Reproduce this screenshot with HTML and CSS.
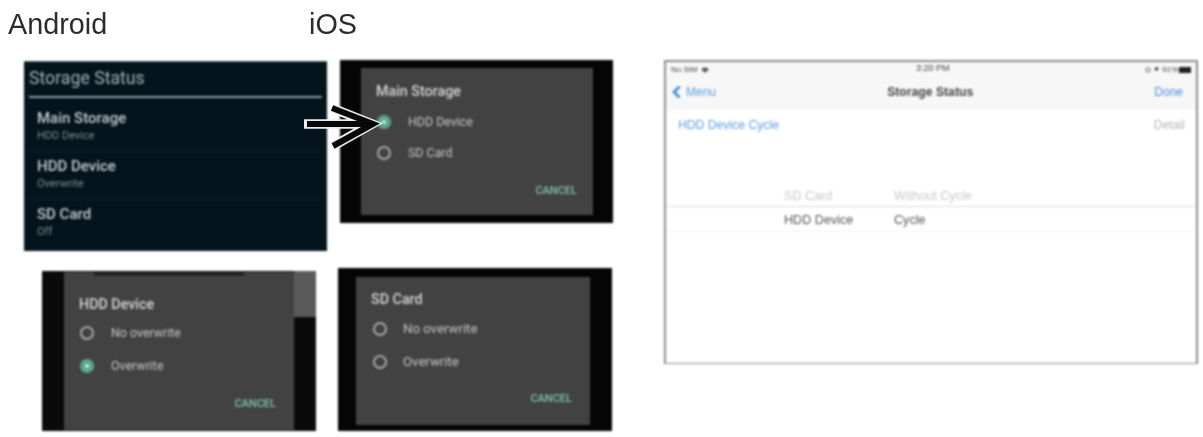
FILE: index.html
```html
<!DOCTYPE html>
<html>
<head>
    <meta charset="utf-8">
    <title>Storage Status</title>
    <link rel="stylesheet" href="styles.css">
</head>
<body>
    <div class="slide">
        <div class="left">
            <div class="labels">
                <div class="label label-android">Android</div>
                <div class="label">iOS</div>
            </div>
            <div class="shots-top">
                <div class="status-panel">
                    <div class="status-title">Storage Status</div>
                    <div class="status-item">
                        <div class="item-name">Main Storage</div>
                        <div class="item-value">HDD Device</div>
                    </div>
                    <div class="status-item">
                        <div class="item-name">HDD Device</div>
                        <div class="item-value">Overwrite</div>
                    </div>
                    <div class="status-item">
                        <div class="item-name">SD Card</div>
                        <div class="item-value">Off</div>
                    </div>
                </div>
                <div class="shot shot-main">
                    <div class="dialog dialog-main">
                        <div class="dialog-title">Main Storage</div>
                        <div class="option"><span class="radio radio-on"></span>HDD Device</div>
                        <div class="option"><span class="radio"></span>SD Card</div>
                        <div class="cancel">CANCEL</div>
                    </div>
                </div>
            </div>
            <div class="shots-bottom">
                <div class="shot shot-hdd">
                    <div class="dialog dialog-hdd">
                        <div class="dialog-title">HDD Device</div>
                        <div class="option"><span class="radio"></span>No overwrite</div>
                        <div class="option"><span class="radio radio-on"></span>Overwrite</div>
                        <div class="cancel">CANCEL</div>
                    </div>
                </div>
                <div class="shot shot-sd">
                    <div class="dialog dialog-sd">
                        <div class="dialog-title">SD Card</div>
                        <div class="option"><span class="radio"></span>No overwrite</div>
                        <div class="option"><span class="radio"></span>Overwrite</div>
                        <div class="cancel">CANCEL</div>
                    </div>
                </div>
            </div>
            <svg class="arrow" width="80" height="50" viewBox="0 0 80 50">
                <g fill="none" stroke-linejoin="miter" stroke-linecap="butt">
                    <path d="M1 19H66M29 3L69 19L30 41" stroke="#eeeeee" stroke-width="9.5"/>
                    <path d="M4 19H66M29 3L70 19L30 41" stroke="#080808" stroke-width="6"/>
                </g>
            </svg>
        </div>
        <div class="ios-panel">
            <div class="ios-top">
                <div class="ios-status">
                    <span class="ios-carrier">No SIM
                        <svg width="8" height="6" viewBox="0 0 8 6"><path d="M0 2a6 6 0 0 1 8 0L4 6z" fill="#555"/></svg>
                    </span>
                    <span class="ios-clock">3:20 PM</span>
                    <span class="ios-battery-wrap">
                        <svg width="6" height="6" viewBox="0 0 6 6"><circle cx="3" cy="3" r="2.2" fill="none" stroke="#666"/></svg>
                        <span class="ios-bt">✱</span>
                        91%<span class="ios-battery"></span>
                    </span>
                </div>
                <div class="ios-nav">
                    <span class="ios-back">
                        <svg width="9" height="14" viewBox="0 0 9 14"><path d="M7.5 1.5L2 7l5.5 5.5" fill="none" stroke="#3d8fd8" stroke-width="2.6"/></svg>
                        Menu
                    </span>
                    <span class="ios-title">Storage Status</span>
                    <span class="ios-done">Done</span>
                </div>
            </div>
            <div class="ios-row">
                <span class="ios-link">HDD Device Cycle</span>
                <span class="ios-detail">Detail</span>
            </div>
            <div class="picker">
                <div class="picker-row picker-dim">
                    <span class="picker-a">SD Card</span>
                    <span>Without Cycle</span>
                </div>
                <div class="picker-row picker-sel">
                    <span class="picker-a">HDD Device</span>
                    <span>Cycle</span>
                </div>
            </div>
        </div>
    </div>
</body>
</html>
```

FILE: styles.css
```css
* {
    box-sizing: border-box;
}

html, body {
    margin: 0;
    padding: 0;
    background-color: white;
}

body {
    width: 1203px;
    height: 437px;
    overflow: hidden;
    font-family: 'Liberation Sans', sans-serif;
}

.slide {
    display: flex;
    padding-left: 8px;
}

.left {
    position: relative;
    width: 656px;
}

.labels {
    display: flex;
    height: 61px;
    padding-top: 8px;
}

.label {
    font-size: 28.8px;
    line-height: 32px;
    color: #2c2c2c;
    filter: blur(0.4px);
}

.label-android {
    width: 301px;
}

.shots-top {
    display: flex;
    padding-left: 16px;
    align-items: flex-start;
}

.status-panel {
    width: 303px;
    height: 190px;
    background-color: #04141c;
    padding: 7px 5px 0 5px;
    font-family: Roboto, sans-serif;
    filter: blur(0.9px);
    border-top: 1px solid #55636a;
}

.status-title {
    font-size: 17.7px;
    line-height: 19px;
    color: #9fb2b6;
    padding-bottom: 8px;
    border-bottom: 2px solid #8b9a9e;
    margin-bottom: 6px;
}

.status-item {
    height: 48px;
    padding: 5px 0 0 8px;
    border-bottom: 1px solid #0d1f27;
}

.status-item:last-child {
    border-bottom: 0;
}

.item-name {
    font-size: 15px;
    line-height: 18px;
    font-weight: 500;
    color: #c3cccd;
}

.item-value {
    font-size: 11px;
    line-height: 17px;
    color: #7f8d90;
}

.shot {
    background-color: #050505;
    filter: blur(1px);
}

.shot-main {
    width: 273px;
    height: 163px;
    margin-left: 13px;
    margin-top: -1px;
    padding: 8px 20px 8px 21px;
}

.shots-bottom {
    display: flex;
    align-items: flex-start;
    margin-top: 17px;
    padding-left: 34px;
}

.shot-hdd {
    width: 274px;
    height: 160px;
    margin-top: 3px;
    padding: 1px 22px 1px 22px;
    background: linear-gradient(#5a5a5a, #5a5a5a) right top / 22px 46px no-repeat, #0a0a0a;
}

.shot-sd {
    width: 274px;
    height: 163px;
    margin-left: 22px;
    padding: 9px 22px 6px 18px;
}

.dialog {
    height: 100%;
    background-color: #424242;
    padding: 15px 16px 0 15px;
    display: flex;
    flex-direction: column;
    font-family: Roboto, sans-serif;
}

.dialog-hdd {
    padding-top: 24px;
    padding-right: 18px;
    background: linear-gradient(#242424, #242424) 30px 0 / 150px 4px no-repeat, #424242;
}

.dialog-sd {
    padding-top: 14px;
    padding-right: 18px;
}

.dialog-title {
    font-size: 14.3px;
    line-height: 16px;
    color: #d5d5d5;
    font-weight: 500;
    margin-bottom: 7px;
}

.dialog-hdd .dialog-title {
    margin-bottom: 4px;
}

.dialog-sd .dialog-title {
    margin-bottom: 5px;
}

.option {
    display: flex;
    align-items: center;
    gap: 17px;
    height: 31px;
    padding-left: 1px;
    font-size: 12.4px;
    color: #c4c4c4;
}

.dialog-hdd .option,
.dialog-sd .option {
    height: 33px;
}

.dialog-sd .option {
    padding-left: 2px;
    gap: 16px;
    font-size: 13.2px;
}

.radio {
    width: 14px;
    height: 14px;
    border-radius: 50%;
    border: 2px solid #a8a8a8;
}

.radio-on {
    background-color: #5aa88c;
    border-color: #5aa88c;
    position: relative;
}

.radio-on::after {
    content: "";
    position: absolute;
    left: 3px;
    top: 3px;
    width: 4px;
    height: 4px;
    border-radius: 50%;
    background-color: #d8e8e0;
}

.cancel {
    margin-top: auto;
    margin-bottom: 18px;
    align-self: flex-end;
    font-size: 11px;
    font-weight: 500;
    color: #7fc4a8;
}

.dialog-hdd .cancel,
.dialog-sd .cancel {
    margin-bottom: 20px;
}

.ios-panel {
    width: 534px;
    height: 304px;
    margin-top: 60px;
    border: 2px solid #8c8c8c;
    border-bottom-width: 1px;
    background-color: white;
    color: #333;
    filter: blur(0.8px);
}

.ios-top {
    height: 48px;
    background-color: #f7f7f7;
    padding: 0 13px 0 5px;
}

.ios-status {
    display: flex;
    justify-content: space-between;
    height: 15px;
    font-size: 8px;
    line-height: 13px;
    color: #444;
}

.ios-carrier {
    display: flex;
    align-items: center;
    gap: 3px;
}

.ios-clock {
    font-size: 9px;
    margin-left: 12px;
}

.ios-battery-wrap {
    display: flex;
    align-items: center;
    gap: 3px;
    margin-right: -8px;
}

.ios-bt {
    font-size: 6px;
}

.ios-battery {
    width: 12px;
    height: 6px;
    margin-left: -2px;
    background-color: #222;
}

.ios-nav {
    display: flex;
    align-items: center;
    justify-content: space-between;
    height: 30px;
    font-size: 12px;
}

.ios-back {
    display: flex;
    align-items: center;
    gap: 5px;
    color: #5a9fe0;
}

.ios-back svg {
    margin-left: 1px;
}

.ios-title {
    font-weight: bold;
    font-size: 12.2px;
    color: #444;
    margin-right: 10px;
}

.ios-done {
    color: #4a90e0;
}

.ios-row {
    display: flex;
    justify-content: space-between;
    padding: 7px 11px 0 12px;
    font-size: 12.2px;
    line-height: 16px;
}

.ios-link {
    color: #5a9fe0;
}

.ios-detail {
    color: #b5b5b5;
}

.picker {
    margin-top: 56px;
    font-size: 12.6px;
}

.picker-row {
    display: flex;
    padding-left: 118px;
    line-height: 15px;
}

.picker-a {
    width: 110px;
}

.picker-dim {
    color: #c8c8c8;
    height: 18px;
    border-bottom: 1px solid #dcdcdc;
}

.picker-sel {
    color: #555;
    height: 25px;
    padding-top: 6px;
    border-bottom: 1px solid #f0f0f0;
}

.arrow {
    position: absolute;
    left: 295px;
    top: 105px;
    filter: blur(0.6px);
}
```
